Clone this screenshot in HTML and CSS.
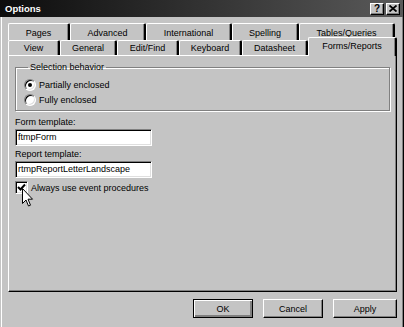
FILE: index.html
```html
<!DOCTYPE html>
<html lang="en">
<head>
    <meta charset="UTF-8">
    <title>Options</title>
    <link rel="stylesheet" href="styles.css">
</head>
<body>
<div class="window">
    <div class="titlebar">
        <span class="title">Options</span>
        <span class="tbtn">?</span>
        <span class="tbtn">
            <svg width="8" height="7" viewBox="0 0 8 7"><path d="M0.5 0.5 L7.5 6.5 M7.5 0.5 L0.5 6.5" stroke="#000" stroke-width="1.8"/></svg>
        </span>
    </div>
    <div class="content">
        <div class="tabs">
            <div class="tab-row back">
                <div class="tab w62">Pages</div>
                <div class="tab w76">Advanced</div>
                <div class="tab w86">International</div>
                <div class="tab w67">Spelling</div>
                <div class="tab w96">Tables/Queries</div>
            </div>
            <div class="tab-row front">
                <div class="tab w52">View</div>
                <div class="tab w57">General</div>
                <div class="tab w62">Edit/Find</div>
                <div class="tab w63">Keyboard</div>
                <div class="tab w66">Datasheet</div>
                <div class="tab selected">Forms/Reports</div>
            </div>
        </div>
        <div class="panel">
            <fieldset class="group">
                <legend>Selection behavior</legend>
                <div class="radio-row"><span class="radio checked"></span>Partially enclosed</div>
                <div class="radio-row"><span class="radio"></span>Fully enclosed</div>
            </fieldset>
            <div class="field first">
                <div class="label">Form template:</div>
                <div class="textbox">ftmpForm</div>
            </div>
            <div class="field">
                <div class="label">Report template:</div>
                <div class="textbox">rtmpReportLetterLandscape</div>
            </div>
            <div class="check-row">
                <span class="checkbox">
                    <svg width="9" height="9" viewBox="0 0 9 9"><path d="M1 4 L3.5 6.5 L8 1.5" fill="none" stroke="#000" stroke-width="2"/></svg>
                </span>
                Always use event procedures
                <svg class="cursor" width="12" height="19" viewBox="0 0 12 19"><path d="M0.5 0.5 L0.5 15.5 L4 12 L6.5 18 L8.5 17.2 L6 11.2 L10.5 11.2 Z" fill="#fff" stroke="#000" stroke-width="1"/></svg>
            </div>
        </div>
        <div class="buttons">
            <div class="btn default">OK</div>
            <div class="btn">Cancel</div>
            <div class="btn apply">Apply</div>
        </div>
    </div>
</div>
</body>
</html>
```

FILE: styles.css
```css
*{
    margin: 0;
    padding: 0;
    box-sizing: border-box;
}
body{
    background: #c4c4c4;
    font-family: "Liberation Sans", Arial, sans-serif;
    font-size: 9px;
    color: #000;
}
.window{
    width: 404px;
    height: 327px;
    background: #c4c4c4;
    border-left: 1px solid #c4c4c4;
    border-right: 1px solid #000;
    box-shadow: inset 1px 0 #fff, inset -1px 0 #808080;
}
.titlebar{
    display: flex;
    align-items: center;
    height: 17px;
    margin-left: -1px;
    padding: 0 3px 0 5px;
    background: linear-gradient(to right, #0c0c0c, #3a3a3a 60%, #5a5a5a);
    color: #fff;
}
.title{
    flex: 1;
    font-weight: bold;
    font-size: 9.5px;
}
.tbtn{
    display: flex;
    align-items: center;
    justify-content: center;
    width: 14px;
    height: 12px;
    margin-left: 2px;
    background: #c4c4c4;
    color: #000;
    font-weight: bold;
    font-size: 10px;
    border-top: 1px solid #fff;
    border-left: 1px solid #fff;
    border-right: 1px solid #000;
    border-bottom: 1px solid #000;
    box-shadow: inset -1px -1px #808080;
}
.content{
    padding: 0 6px 0 7px;
}
.tabs{
    margin-top: 6px;
}
.tab-row{
    display: flex;
}
.tab-row.back{
    height: 17px;
}
.tab-row.front{
    height: 15px;
    align-items: flex-end;
}
.tab{
    display: flex;
    align-items: center;
    justify-content: center;
    height: 100%;
    border-top: 1px solid #fff;
    border-left: 1px solid #fff;
    border-right: 2px solid #000;
    border-radius: 2px 2px 0 0;
    box-shadow: inset -1px 0 #808080;
    white-space: nowrap;
}
.back .tab{
    padding-top: 2px;
}
.tab.selected{
    position: relative;
    z-index: 1;
    flex: 1;
    height: 19px;
    margin-bottom: -1px;
    padding-bottom: 3px;
    background: #c4c4c4;
}
.w52{ width: 52px; }
.w57{ width: 57px; }
.w62{ width: 62px; }
.w63{ width: 63px; }
.w66{ width: 66px; }
.w67{ width: 67px; }
.w76{ width: 76px; }
.w86{ width: 86px; }
.w96{ width: 96px; }
.panel{
    height: 237px;
    padding: 0 6px;
    border-top: 1px solid #fff;
    border-left: 1px solid #fff;
    border-right: 1px solid #000;
    border-bottom: 1px solid #000;
    box-shadow: inset -1px -1px #808080;
}
.group{
    margin-top: 6px;
    padding: 4px 8px 3px;
    border: 1px solid #808080;
    box-shadow: inset 1px 1px #fff, 1px 1px #fff;
}
.group legend{
    margin-left: 4px;
    padding: 0 2px;
    line-height: 11px;
}
.radio-row{
    display: flex;
    align-items: center;
    height: 15px;
}
.radio{
    width: 12px;
    height: 12px;
    margin-right: 3px;
    border-radius: 50%;
    background: #fff;
    border: 1px solid;
    border-color: #808080 #fff #fff #808080;
    box-shadow: inset 1px 1px #000, inset -1px -1px #dfdfdf;
    position: relative;
}
.radio.checked::after{
    content: "";
    position: absolute;
    left: 3px;
    top: 3px;
    width: 4px;
    height: 4px;
    border-radius: 50%;
    background: #000;
}
.field{
    margin-top: 3px;
}
.field.first{
    margin-top: 6px;
}
.label{
    line-height: 11px;
    margin-bottom: 1px;
}
.textbox{
    width: 137px;
    height: 17px;
    padding: 0 2px;
    line-height: 14px;
    background: #fff;
    border: 1px solid;
    border-color: #808080 #fff #fff #808080;
    box-shadow: inset 1px 1px #000, inset -1px -1px #dfdfdf;
    white-space: nowrap;
}
.check-row{
    position: relative;
    display: flex;
    align-items: center;
    height: 13px;
    margin-top: 3px;
}
.checkbox{
    display: flex;
    align-items: center;
    justify-content: center;
    width: 13px;
    height: 13px;
    margin-right: 3px;
    background: #fff;
    border: 1px solid;
    border-color: #808080 #fff #fff #808080;
    box-shadow: inset 1px 1px #000, inset -1px -1px #dfdfdf;
}
.cursor{
    position: absolute;
    left: 7px;
    top: 7px;
}
.buttons{
    display: flex;
    justify-content: flex-end;
    gap: 10px;
    margin-top: 7px;
}
.btn{
    display: flex;
    align-items: center;
    justify-content: center;
    width: 60px;
    height: 19px;
    border-top: 1px solid #fff;
    border-left: 1px solid #fff;
    border-right: 1px solid #000;
    border-bottom: 1px solid #000;
    box-shadow: inset -1px -1px #808080;
}
.btn.apply{
    width: 64px;
}
.btn.default{
    border: 1px solid #000;
    box-shadow: inset 1px 1px #fff, inset -2px -2px #808080;
}
```
